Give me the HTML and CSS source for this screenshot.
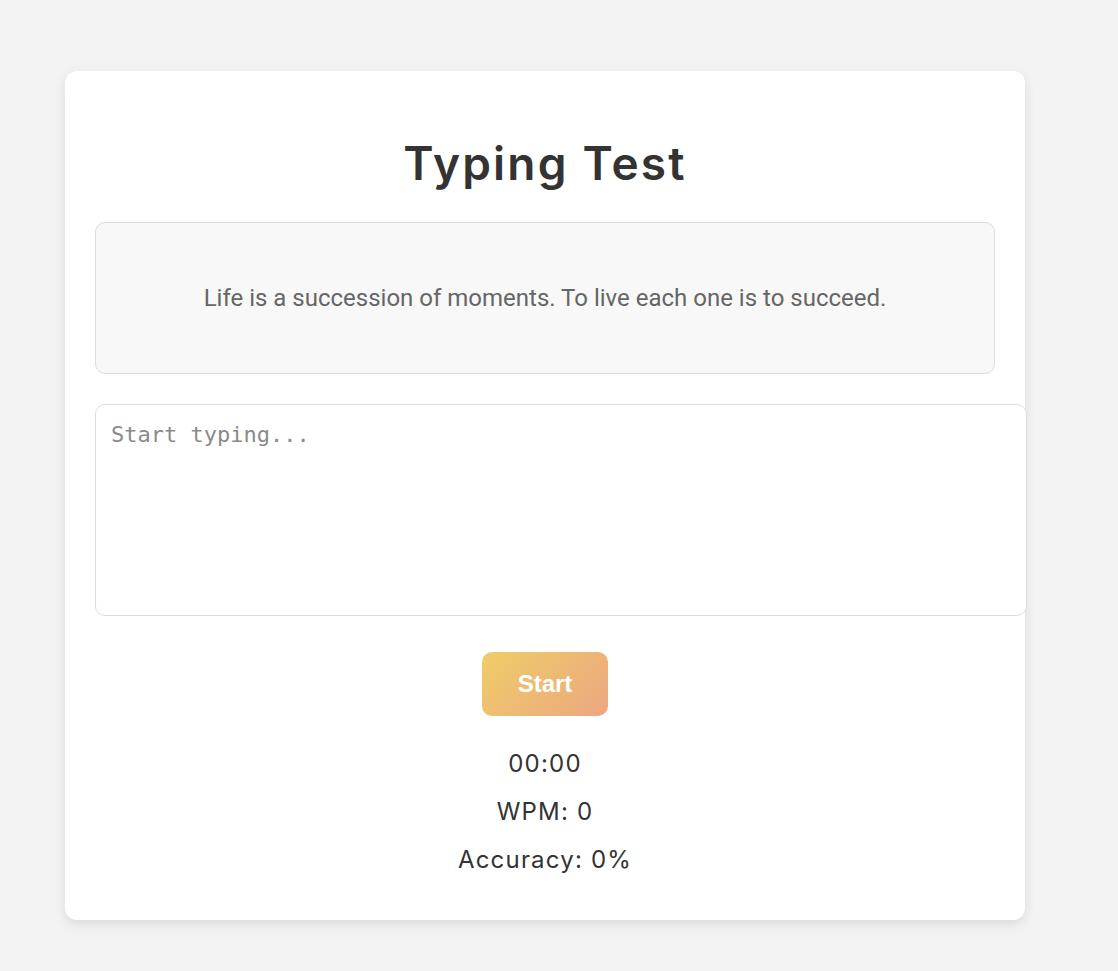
FILE: index.html
```html
<!DOCTYPE html>
<html lang="en">
<head>
<meta charset="utf-8">
<title>Typing Test</title>
<link rel="stylesheet" href="styles.css">
</head>
<body>
  <main class="card">
    <h1 class="title">Typing Test</h1>
    <div class="quote">
      <p class="quote-text">Life is a succession of moments. To live each one is to succeed.</p>
    </div>
    <textarea class="input" placeholder="Start typing..."></textarea>
    <div class="actions">
      <button class="start-btn" type="button">Start</button>
    </div>
    <div class="stats">
      <p class="stat">00:00</p>
      <p class="stat">WPM: 0</p>
      <p class="stat">Accuracy: 0%</p>
    </div>
  </main>
</body>
</html>
```

FILE: styles.css
```css
* {
  box-sizing: border-box;
}

html, body {
  margin: 0;
  padding: 0;
}

body {
  background: #f3f3f3;
  font-family: "Inter", "Open Sans", sans-serif;
  color: #333;
  padding: 71px 0 52px 65px;
}

.card {
  width: 960px;
  background: #ffffff;
  border-radius: 12px;
  box-shadow: 0 4px 12px rgba(0, 0, 0, 0.1);
  padding: 30px 30px 36px;
}

.title {
  margin: 36px 0 32px;
  text-align: center;
  font-size: 46px;
  line-height: 53px;
  font-weight: 600;
  letter-spacing: 2.2px;
  color: #333;
}

.quote {
  background: #f8f8f8;
  border: 1px solid #dddddd;
  border-radius: 10px;
  padding: 59px 20px;
}

.quote-text {
  margin: 0;
  text-align: center;
  font-family: "Roboto", sans-serif;
  font-size: 24px;
  line-height: 32px;
  color: #666;
}

.input {
  display: block;
  box-sizing: content-box;
  width: 100%;
  height: 180px;
  margin: 30px 0 0;
  padding: 15px;
  border: 1px solid #dddddd;
  border-radius: 10px;
  font-family: "DejaVu Sans Mono", monospace;
  font-size: 22px;
  line-height: 30px;
  color: #333;
  resize: none;
  outline: none;
  background: #fff;
}

.input::placeholder {
  color: #8a8a8a;
}

.actions {
  display: flex;
  justify-content: center;
  margin-top: 36px;
}

.start-btn {
  border: none;
  border-radius: 10px;
  padding: 20px 36px;
  font-family: "Liberation Sans", Arial, sans-serif;
  font-weight: 700;
  font-size: 24px;
  line-height: 24px;
  color: #fff;
  background: linear-gradient(135deg, #efcd69 0%, #eca680 100%);
  cursor: pointer;
}

.stats {
  margin-top: 24px;
  display: flex;
  flex-direction: column;
  align-items: center;
}

.stat {
  margin: 0;
  font-size: 24px;
  line-height: 48px;
  font-weight: 400;
  letter-spacing: 1.2px;
  color: #333;
}
```
